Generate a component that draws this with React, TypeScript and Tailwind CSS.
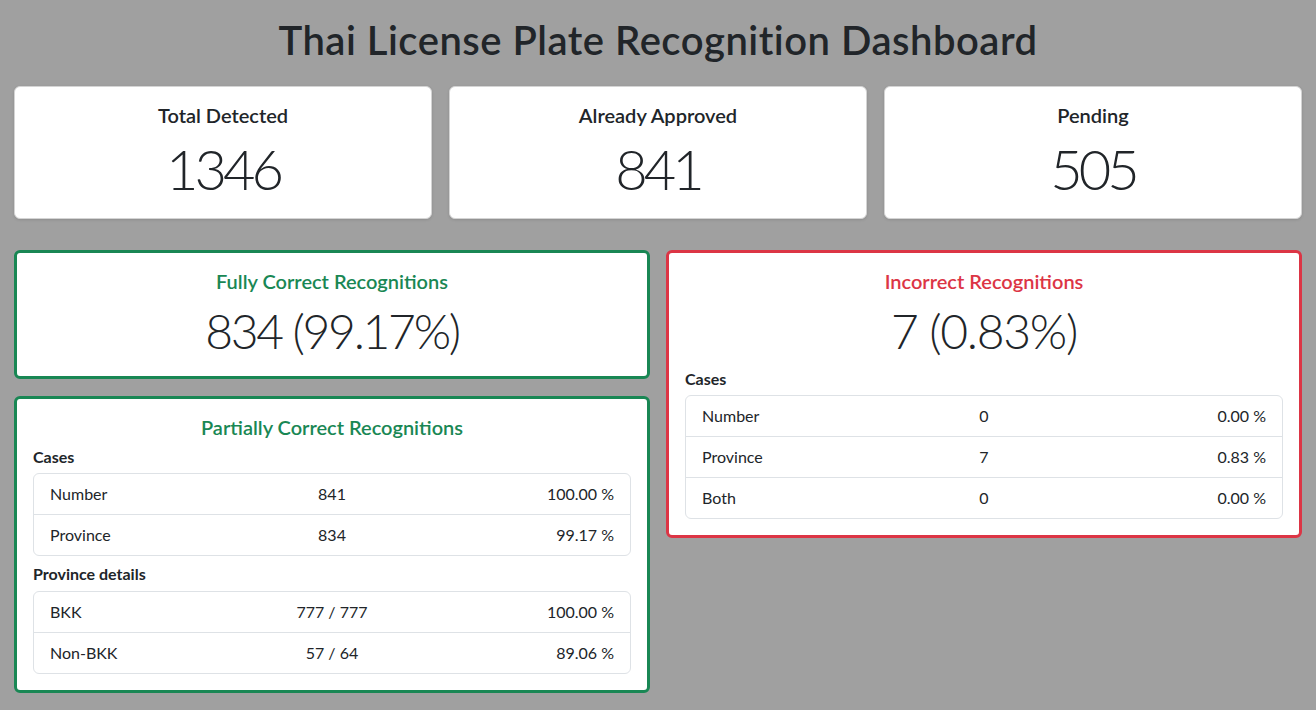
import React from "react";

const font = { fontFamily: "Lato, 'Open Sans', sans-serif" };

function StatCard({ title, value }: { title: string; value: string }) {
  return (
    <div className="bg-white rounded-[6px] border border-[#d4d4d4] shadow-[0_1px_3px_rgba(0,0,0,0.12)] p-4 text-center">
      <h5 className="text-[20px] leading-[24px] font-semibold text-[#212529] mb-2">{title}</h5>
      <div className="text-[56px] leading-[67px] font-light tracking-[-4px] text-[#212529]">{value}</div>
    </div>
  );
}

function Row({ a, b, c, last }: { a: string; b: string; c: string; last?: boolean }) {
  return (
    <div className={`grid grid-cols-3 px-4 py-2 text-[16px] leading-[24px] text-[#212529] ${last ? "" : "border-b border-[#dee2e6]"}`}>
      <div className="text-left">{a}</div>
      <div className="text-center">{b}</div>
      <div className="text-right">{c}</div>
    </div>
  );
}

function List({ rows }: { rows: [string, string, string][] }) {
  return (
    <div className="border border-[#dee2e6] rounded-[6px] bg-white">
      {rows.map((r, i) => (
        <Row key={i} a={r[0]} b={r[1]} c={r[2]} last={i === rows.length - 1} />
      ))}
    </div>
  );
}

export default function App() {
  return (
    <div className="min-h-[710px] bg-[#a0a0a0] px-[14px] pt-[16px] pb-4" style={font}>
      <h1 className="text-center text-[40px] leading-[48px] font-semibold tracking-[0.5px] text-[#212529] mb-[22px]">
        Thai License Plate Recognition Dashboard
      </h1>
      <div className="grid grid-cols-3 gap-[17px] mb-[31px]">
        <StatCard title="Total Detected" value="1346" />
        <StatCard title="Already Approved" value="841" />
        <StatCard title="Pending" value="505" />
      </div>
      <div className="grid grid-cols-2 gap-4 items-start">
        <div className="flex flex-col gap-[17px]">
          <div className="bg-white rounded-[6px] border-[3px] border-[#198754] p-4 text-center">
            <h5 className="text-[20px] leading-[24px] font-semibold text-[#198754] mb-2">Fully Correct Recognitions</h5>
            <div className="text-[48px] leading-[59px] font-light tracking-[-2.3px] text-[#212529]">834 (99.17%)</div>
          </div>
          <div className="bg-white rounded-[6px] border-[3px] border-[#198754] p-4">
            <h5 className="text-center text-[20px] leading-[24px] font-semibold text-[#198754] mb-2">Partially Correct Recognitions</h5>
            <div className="text-[16px] leading-[20px] font-bold text-[#212529] mb-[6px]">Cases</div>
            <List rows={[["Number", "841", "100.00 %"], ["Province", "834", "99.17 %"]]} />
            <div className="text-[16px] leading-[20px] font-bold text-[#212529] mt-2 mb-[7px]">Province details</div>
            <List rows={[["BKK", "777 / 777", "100.00 %"], ["Non-BKK", "57 / 64", "89.06 %"]]} />
          </div>
        </div>
        <div className="bg-white rounded-[6px] border-[3px] border-[#dc3545] p-4">
          <h5 className="text-center text-[20px] leading-[24px] font-semibold text-[#dc3545] mb-2">Incorrect Recognitions</h5>
          <div className="text-center text-[48px] leading-[59px] font-light tracking-[-1.3px] text-[#212529] mb-[9px]">7 (0.83%)</div>
          <div className="text-[16px] leading-[20px] font-bold text-[#212529] mb-[6px]">Cases</div>
          <List rows={[["Number", "0", "0.00 %"], ["Province", "7", "0.83 %"], ["Both", "0", "0.00 %"]]} />
        </div>
      </div>
    </div>
  );
}
